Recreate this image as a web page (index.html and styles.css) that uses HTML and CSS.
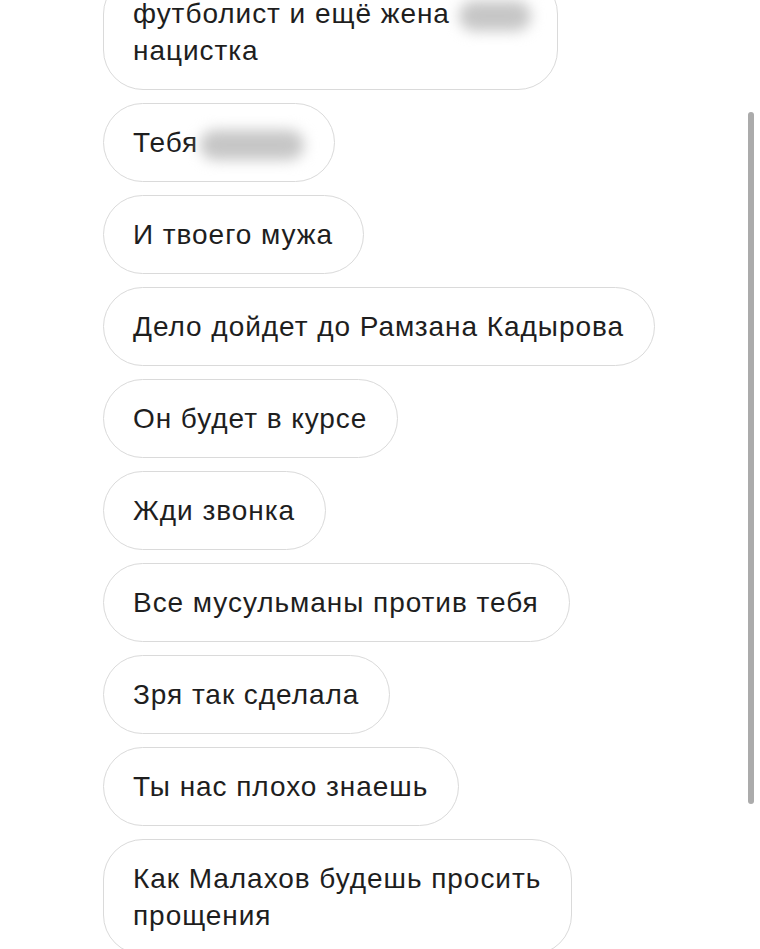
FILE: index.html
```html
<!DOCTYPE html>
<html lang="ru">
<head>
<meta charset="utf-8">
<link rel="stylesheet" href="styles.css">
</head>
<body>
<div class="thread">
  <div class="bubble bubble-first">футболист и ещё жена <span class="blur blur-short"></span><br>нацистка</div>
  <div class="bubble">Тебя<span class="blur blur-long"></span></div>
  <div class="bubble">И твоего мужа</div>
  <div class="bubble">Дело дойдет до Рамзана Кадырова</div>
  <div class="bubble">Он будет в курсе</div>
  <div class="bubble">Жди звонка</div>
  <div class="bubble">Все мусульманы против тебя</div>
  <div class="bubble">Зря так сделала</div>
  <div class="bubble">Ты нас плохо знаешь</div>
  <div class="bubble">Как Малахов будешь просить<br>прощения</div>
</div>
<div class="scrollbar"></div>
</body>
</html>
```
FILE: styles.css
```css
html, body {
  margin: 0;
  padding: 0;
  background: #ffffff;
  overflow: hidden;
}
body {
  width: 760px;
  height: 949px;
  font-family: "Liberation Sans", Arial, sans-serif;
  color: #1e1e1e;
}
.thread {
  display: flex;
  flex-direction: column;
  align-items: flex-start;
  gap: 13px;
  padding-left: 103px;
  margin-top: -26px;
}
.bubble {
  border: 1px solid #dadada;
  border-radius: 40px;
  padding: 20px 30px 20px 29px;
  font-size: 28px;
  letter-spacing: 0.95px;
  line-height: 37px;
  white-space: nowrap;
}
.bubble-first {
  padding-right: 26px;
}
.blur {
  display: inline-block;
  vertical-align: middle;
  height: 30px;
  background: #c6c6c6;
  border-radius: 15px;
  filter: blur(7px);
}
.blur-short {
  width: 72px;
  margin-left: 0;
}
.blur-long {
  width: 104px;
  margin-left: 2px;
}
.scrollbar {
  position: absolute;
  left: 748px;
  top: 112px;
  width: 6px;
  height: 692px;
  border-radius: 3px;
  background: #ababab;
}
```
